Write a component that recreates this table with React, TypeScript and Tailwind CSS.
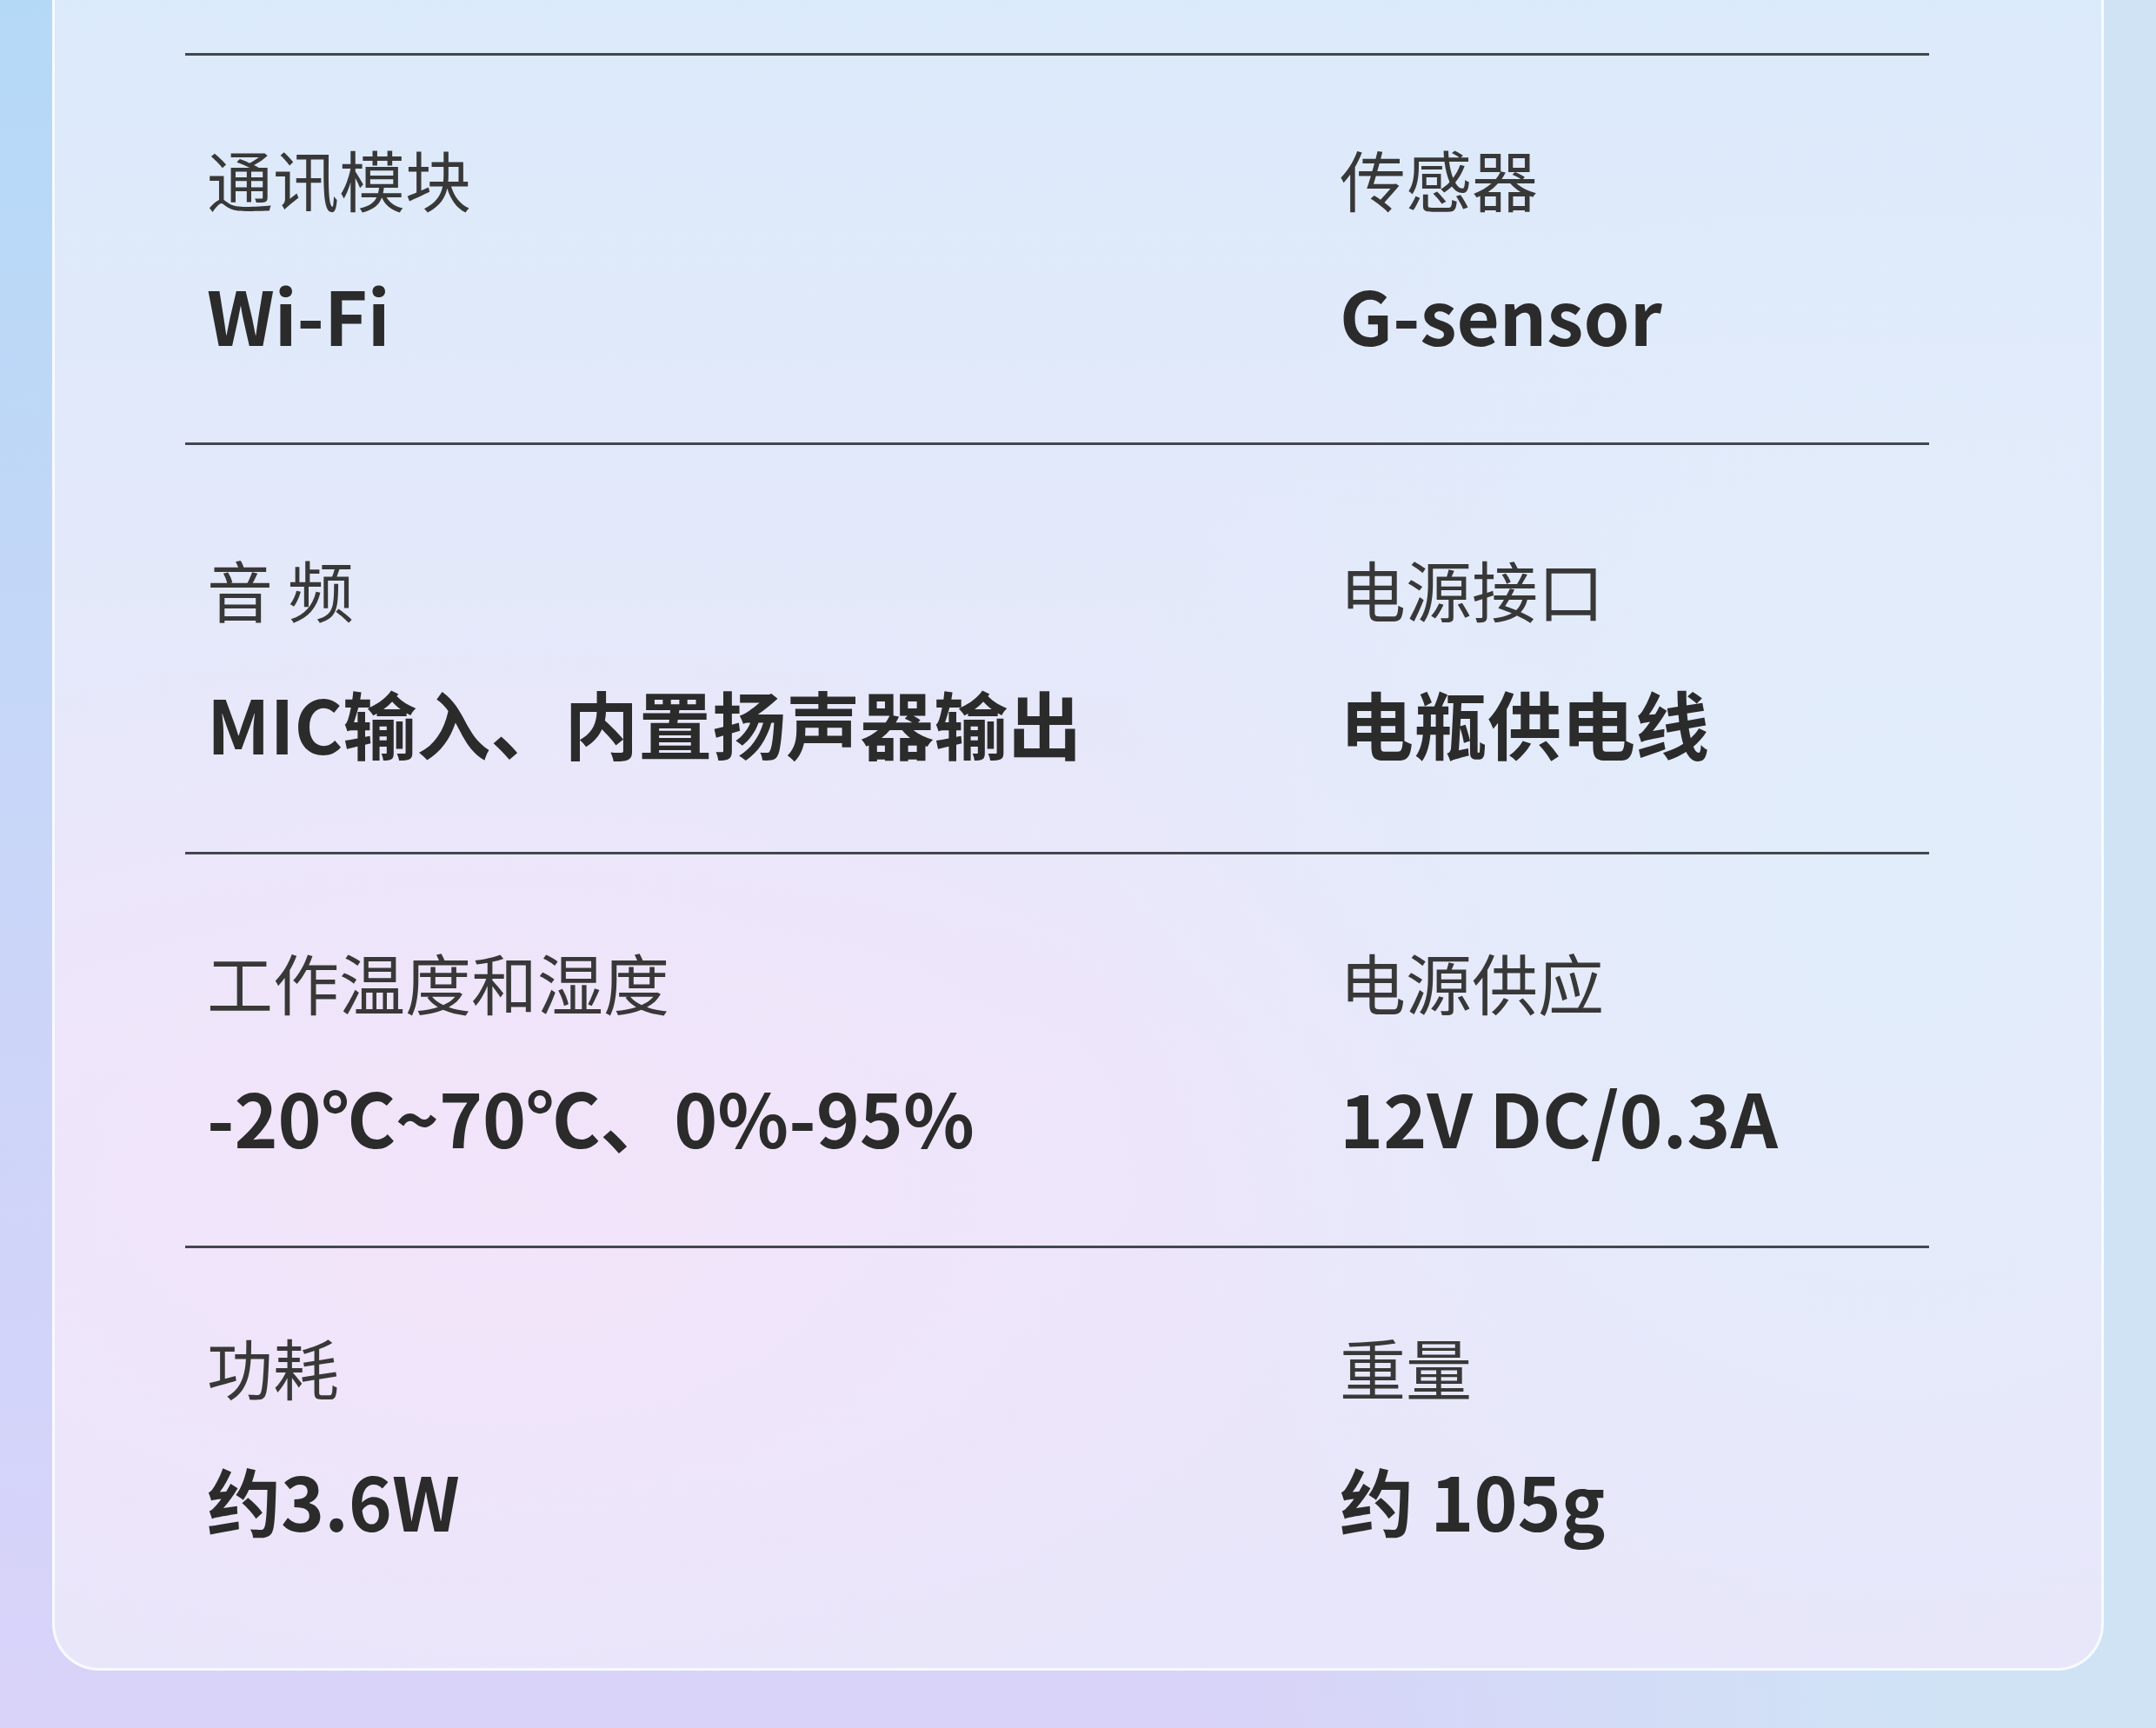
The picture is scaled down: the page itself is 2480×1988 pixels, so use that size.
import React from "react";

type Row = {
  mt: string;
  gap: string;
  pb: string;
  left: [string, string];
  right: [string, string];
};

const rows: Row[] = [
  { mt: "pt-[103px]", gap: "mt-[75px]", pb: "pb-[105px]", left: ["通讯模块", "Wi-Fi"], right: ["传感器", "G-sensor"] },
  { mt: "pt-[127px]", gap: "mt-[73px]", pb: "pb-[106px]", left: ["音 频", "MIC输入、内置扬声器输出"], right: ["电源接口", "电瓶供电线"] },
  { mt: "pt-[108px]", gap: "mt-[74px]", pb: "pb-[106px]", left: ["工作温度和湿度", "-20℃~70℃、0%-95%"], right: ["电源供应", "12V DC/0.3A"] },
  { mt: "pt-[98px]", gap: "mt-[72px]", pb: "pb-0", left: ["功耗", "约3.6W"], right: ["重量", "约 105g"] },
];

function Cell({ label, value, gap }: { label: string; value: string; gap: string }) {
  return (
    <div className="flex flex-col">
      <div className="text-[76px] leading-[76px] font-normal text-[#383838] whitespace-pre">{label}</div>
      <div className={`${gap} text-[85px] leading-[86px] font-bold text-[#2b2b2b] whitespace-pre`}>{value}</div>
    </div>
  );
}

export default function App() {
  return (
    <div
      className="w-[2480px] h-[1988px] overflow-hidden bg-[linear-gradient(to_right,rgba(207,227,245,0)_0%,rgba(207,227,245,0)_55%,#cfe3f5_90%),linear-gradient(to_bottom,#b4d9f7_0%,#c9d6f8_50%,#d9d2f9_100%)]"
      style={{ fontFamily: '"Noto Sans CJK SC", "Noto Sans", sans-serif' }}
    >
      <div className="ml-[60px] w-[2360px] h-[1922px] rounded-b-[54px] border-x-[3px] border-b-[3px] border-[#f7faff] pt-[61px] pl-[150px] bg-[radial-gradient(ellipse_45%_35%_at_22%_72%,rgba(243,228,250,0.95)_0%,rgba(243,228,250,0)_100%),radial-gradient(ellipse_40%_50%_at_90%_55%,rgba(224,238,251,0.9)_0%,rgba(224,238,251,0)_100%),linear-gradient(to_bottom,#dbeafa_0%,#e4e9fa_35%,#ebe6fa_65%,#e8e6fa_100%)]">
        {rows.map((r, i) => (
          <div key={i} className="flex flex-col">
            <div className="w-[2006px] h-[3px] bg-[#42474f]" />
            <div className={`${r.mt} ${r.pb} pl-[25px] grid grid-cols-[1303px_1fr]`}>
              <Cell label={r.left[0]} value={r.left[1]} gap={r.gap} />
              <Cell label={r.right[0]} value={r.right[1]} gap={r.gap} />
            </div>
          </div>
        ))}
      </div>
    </div>
  );
}
